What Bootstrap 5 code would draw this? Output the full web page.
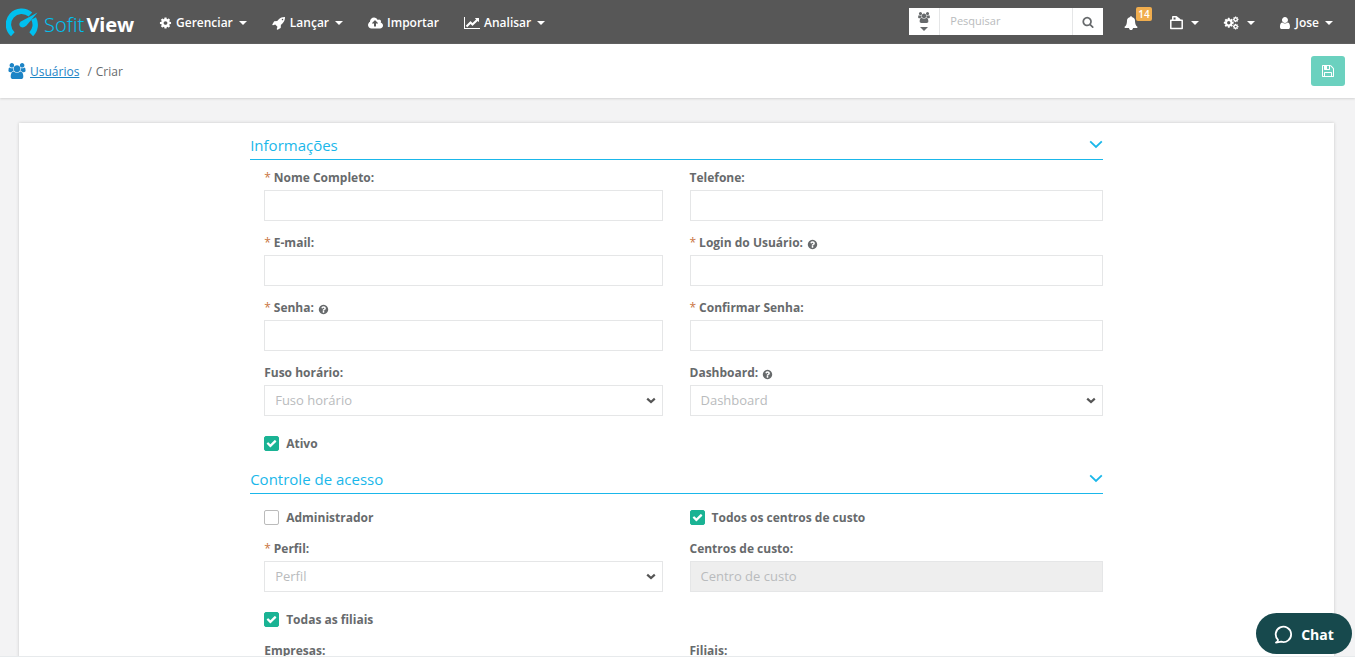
<!DOCTYPE html>
<html lang="pt-BR">
<head>
<meta charset="utf-8">
<meta name="viewport" content="width=device-width, initial-scale=1">
<title>SofitView - Usuários</title>
<link href="https://cdn.jsdelivr.net/npm/bootstrap@5.3.0/dist/css/bootstrap.min.css" rel="stylesheet">
<style>
  body { font-family: "Open Sans", sans-serif; font-size: 13px; line-height: 20px; color: #676a6c; background: #f3f3f4; }
  svg { fill: currentColor; flex: none; }
  .topbar { background: #575757; min-height: 44px; padding: 2px 22px 0 6px; }
  .brand-text { font-family: "Noto Sans", sans-serif; font-size: 20px; line-height: 28px; padding-top: 3px; }
  .brand-a { color: #00c0ef; font-weight: 300; }
  .brand-b { color: #fff; font-weight: 700; margin-left: 2px; }
  .topbar .menu-link { color: #fff; font-size: 12px; font-weight: 600; text-decoration: none; display: flex; align-items: center; gap: 4px; white-space: nowrap; }
  .tri { width: 0; height: 0; border: 4px solid transparent; border-top-color: currentColor; border-bottom: 0; margin-left: 2px; }
  .main-menu { gap: 25px; margin-left: 25px; }
  .side-menu { gap: 24px; margin-left: 21px; }
  .search-box { width: 194px; height: 27px; background: #fff; margin-bottom: 3px; }
  .search-box button { border: 0; background: #fff; color: #676a6c; padding: 0; width: 30px; }
  .search-box input { border: 1px solid #e5e6e7; border-width: 0 1px; border-radius: 0; font-size: 11px; padding: 0 10px; color: #676a6c; box-shadow: none; min-width: 0; }
  .notice { left: 12px; top: -6px; background: #f0ad4e; color: #fff; font-size: 10px; line-height: 14px; padding: 0 2px; border-radius: 2px; font-weight: 600; }
  .crumbs { background: #fff; min-height: 54px; padding: 0 10px 0 8px; box-shadow: 0 1px 2px #d4d4d4; font-size: 12px; }
  .crumbs a, .crumbs span { padding-top: 2px; }
  .crumbs a, .crumbs-icon { color: #1c84c6; }
  .btn-save { background: #6bd1bf; color: #fff; width: 34px; height: 30px; border-radius: 3px; padding: 0; }
  .btn-save:hover { background: #1ab394; color: #fff; }
  .panel { background: #fff; margin: 25px 21px 0 19px; padding-top: 10px; min-height: 700px; box-shadow: 0 0 3px #c8c8c8; }
  .form-col { padding: 0 12px; }
  .section-title { color: #1ab7ea; border-bottom: 1px solid #1ab7ea; height: 27px; font-size: 15px; line-height: 24px; font-weight: 500; margin: 0; padding-bottom: 2px; }
  .section-title button { border: 0; background: none; color: inherit; padding: 0 0 4px; line-height: 1; }
  .fields { --bs-gutter-x: 0; }
  .col-l { padding: 0 14px; }
  .col-r { padding-left: 13px; }
  .field { margin-top: 14px; }
  .first-field { margin-top: 10px; }
  .field label { display: flex; align-items: center; height: 16px; margin-bottom: 4px; font-size: 12px; font-weight: 700; }
  .field label i { color: #c9743f; font-style: normal; font-weight: 400; margin-right: 3px; }
  .field label svg { margin-left: 4px; margin-top: 2px; }
  .field .form-control, .field .form-select { height: 31px; font-size: 13px; line-height: 20px; border: 1px solid #e5e6e7; border-radius: 0; padding: 3px 10px 5px; color: #b9bbbd; background-color: #fff; }
  .field .form-select { background-image: url("data:image/svg+xml,%3Csvg xmlns='http://www.w3.org/2000/svg' viewBox='0 0 10 7'%3E%3Cpath d='M1.2 1.6 5 5 8.8 1.6' fill='none' stroke='%23555' stroke-width='2.2'/%3E%3C/svg%3E"); background-size: 10px 7px; background-position: right 6px center; }
  .field .form-control:disabled { background: #eee; }
  .form-control::placeholder { color: #b9bbbd; opacity: 1; }
  .tick { display: flex; align-items: center; gap: 7px; height: 20px; margin-top: 17px; font-size: 12px; line-height: 18px; font-weight: 700; }
  .tick span { padding-top: 2px; }
  .tick-top { margin-top: 13px; }
  .group-gap { margin-top: 14px; }
  .tick .form-check-input { width: 15px; height: 15px; margin: 0; border: 1px solid #bbb; border-radius: 2px; flex: none; }
  .tick .form-check-input:checked { background-color: #1ab394; border-color: #1ab394; background-size: 11px 11px; background-image: url("data:image/svg+xml,%3Csvg xmlns='http://www.w3.org/2000/svg' viewBox='0 0 1792 1792'%3E%3Cpath fill='%23fff' d='M1671 566q0 40-28 68l-724 724-136 136q-28 28-68 28t-68-28l-136-136-362-362q-28-28-28-68t28-68l136-136q28-28 68-28t68 28l294 295 656-657q28-28 68-28t68 28l136 136q28 28 28 68z'/%3E%3C/svg%3E"); }
  .page-foot { border-top: 1px solid #e7eaec; }
  .chat { right: 3px; bottom: 3px; width: 96px; height: 41px; border: 0; border-radius: 21px; background: #17494d; color: #fff; font-size: 14px; font-weight: 700; padding-top: 3px; }
</style>
</head>
<body class="vh-100 d-flex flex-column overflow-hidden">

<svg class="d-none" aria-hidden="true">
  <symbol id="gear" viewBox="0 0 1792 1792"><path d="M1152 896q0-106-75-181t-181-75-181 75-75 181 75 181 181 75 181-75 75-181zm512-109v222q0 12-8 23t-20 13l-185 28q-19 54-39 91 35 50 107 138 10 12 10 25t-9 23q-27 37-99 108t-94 71q-12 0-26-9l-138-108q-44 23-91 38-16 136-29 186-7 28-36 28h-222q-14 0-24.500-8.500t-11.500-21.500l-28-184q-49-16-90-37l-141 107q-10 9-25 9-14 0-25-11-126-114-165-168-7-10-7-23 0-12 8-23 15-21 51-66.500t54-70.500q-27-50-41-99l-183-27q-13-2-21-12.500t-8-23.500v-222q0-12 8-23t19-13l186-28q14-46 39-92-40-57-107-138-10-12-10-24 0-10 9-23 26-36 98.500-107.500t94.500-71.500q13 0 26 10l138 107q44-23 91-38 16-136 29-186 7-28 36-28h222q14 0 24.500 8.500t11.500 21.500l28 184q49 16 90 37l142-107q9-9 24-9 13 0 25 10 129 119 165 170 7 8 7 22 0 12-8 23-15 21-51 66.500t-54 70.500q26 50 41 98l183 28q13 2 21 12.500t8 23.500z"/></symbol>
  <symbol id="users" viewBox="0 0 1920 1792"><path d="M593 896q-162 5-265 128h-134q-82 0-138-40.500t-56-118.500q0-353 124-353 6 0 43.500 21t97.500 42.500 119 21.500q67 0 133-23-5 37-5 66 0 139 81 256zm1071 637q0 120-73 189.500t-194 69.500h-874q-121 0-194-69.500t-73-189.500q0-53 3.500-103.500t14-109 26.500-108.500 43-97.500 62-81 85.500-53.500 111.500-20q10 0 43 21.500t73 48 107 48 135 21.500 135-21.500 107-48 73-48 43-21.500q61 0 111.500 20t85.500 53.500 62 81 43 97.500 26.500 108.500 14 109 3.500 103.500zm-1024-1277q0 106-75 181t-181 75-181-75-75-181 75-181 181-75 181 75 75 181zm704 384q0 159-112.500 271.500t-271.500 112.500-271.500-112.500-112.500-271.500 112.500-271.500 271.500-112.500 271.500 112.500 112.500 271.500zm576 225q0 78-56 118.500t-138 40.500h-134q-103-123-265-128 81-117 81-256 0-29-5-66 66 23 133 23 59 0 119-21.500t97.500-42.500 43.500-21q124 0 124 353zm-128-609q0 106-75 181t-181 75-181-75-75-181 75-181 181-75 181 75 75 181z"/></symbol>
  <symbol id="help" viewBox="0 0 1792 1792"><path d="M1024 1376v-192q0-14-9-23t-23-9h-192q-14 0-23 9t-9 23v192q0 14 9 23t23 9h192q14 0 23-9t9-23zm256-672q0-88-55.500-163t-138.500-116-170-41q-243 0-371 213-15 24 8 42l132 100q7 6 19 6 16 0 25-12 53-68 86-92 34-24 86-24 48 0 85.500 26t37.500 59q0 38-20 61t-68 45q-63 28-115.500 86.500t-52.500 125.500v36q0 14 9 23t23 9h192q14 0 23-9t9-23q0-19 21.500-49.500t54.500-49.500q32-18 49-28.500t46-35 44.500-48 28-60.500 12.500-81zm384 192q0 209-103 385.500t-279.500 279.500-385.500 103-385.500-103-279.500-279.500-103-385.500 103-385.500 279.500-279.500 385.500-103 385.500 103 279.500 279.500 103 385.500z"/></symbol>
  <symbol id="angle" viewBox="0 0 14 9"><path d="M1.200 1.300 7 7 12.800 1.300" fill="none" stroke="currentColor" stroke-width="1.800"/></symbol>
</svg>

<nav class="topbar d-flex align-items-center flex-shrink-0" aria-label="Principal">
  <a href="#" class="d-flex align-items-center text-decoration-none">
    <svg width="34" height="30" viewBox="0 0 34 30" aria-hidden="true">
      <path d="M6.800 26.200A13 13 0 1 1 24.400 6.600M27.600 10.500A13 13 0 0 1 25.200 26.200" fill="none" stroke="#00c0ef" stroke-width="5.400"/>
      <path d="M31.500 4.600 20.500 17.600q-2.600 2.800-6 1.200-2.600-2.700.4-5.300z" fill="#00c0ef"/>
    </svg>
    <span class="brand-text ms-1"><span class="brand-a">Sofit</span><span class="brand-b">View</span></span>
  </a>
  <div class="main-menu d-flex">
    <a href="#" class="menu-link"><svg width="13" height="14"><use href="#gear"/></svg>Gerenciar<span class="tri"></span></a>
    <a href="#" class="menu-link"><svg width="14" height="14" viewBox="0 0 1792 1792"><path d="M1440 448q0-40-28-68t-68-28-68 28-28 68 28 68 68 28 68-28 28-68zm224-288q0 249-75.500 430.500t-253.500 360.500q-81 80-195 176l-20 379q-2 16-16 26l-384 224q-7 4-16 4-12 0-23-9l-64-64q-13-14-8-32l85-276-281-281-276 85q-3 1-9 1-14 0-23-9l-64-64q-17-19-5-39l224-384q10-14 26-16l379-20q96-114 176-195 188-187 358-258t431-71q14 0 24 9.500t10 22.500z"/></svg>Lançar<span class="tri"></span></a>
    <a href="#" class="menu-link"><svg width="15" height="14" viewBox="0 0 1920 1792"><path d="M1280 928q0-14-9-23l-352-352q-9-9-23-9t-23 9l-351 351q-10 12-10 24 0 14 9 23t23 9h224v352q0 13 9.500 22.500t22.500 9.500h192q13 0 22.500-9.500t9.500-22.500v-352h224q13 0 22.500-9.500t9.500-22.500zm640 288q0 159-112.500 271.500t-271.500 112.500h-1088q-185 0-316.500-131.500t-131.500-316.500q0-130 70-240t188-165q-2-30-2-43 0-212 150-362t362-150q156 0 285.500 87t188.500 231q71-62 166-62 106 0 181 75t75 181q0 76-41 138 130 31 213.500 135.500t83.500 238.500z"/></svg>Importar</a>
    <a href="#" class="menu-link"><svg width="16" height="14" viewBox="0 0 2048 1792"><path d="M2048 1536v128h-2048v-1536h128v1408h1920zm-128-1248v435q0 21-19.500 29.500t-35.500-7.500l-121-121-633 633q-10 10-23 10t-23-10l-233-233-416 416-192-192 585-585q10-10 23-10t23 10l233 233 464-464-121-121q-16-16-7.500-35.500t29.500-19.500h435q14 0 23 9t9 23z"/></svg>Analisar<span class="tri"></span></a>
  </div>
  <form class="search-box d-flex ms-auto">
    <button type="button" class="d-flex flex-column align-items-center justify-content-center gap-1" aria-label="Tipo de busca"><svg width="12" height="11"><use href="#users"/></svg><span class="tri m-0"></span></button>
    <input type="text" class="form-control flex-fill w-auto" placeholder="Pesquisar" aria-label="Pesquisar" size="1">
    <button type="submit" class="d-flex align-items-center justify-content-center" aria-label="Buscar"><svg width="12" height="12" viewBox="0 0 1792 1792"><path d="M1216 832q0-185-131.500-316.500t-316.500-131.500-316.500 131.500-131.500 316.500 131.500 316.500 316.500 131.500 316.500-131.500 131.500-316.500zm512 832q0 52-38 90t-90 38q-54 0-90-38l-343-342q-179 124-399 124-143 0-273.500-55.500t-225-150-150-225-55.500-273.500 55.500-273.500 150-225 225-150 273.500-55.500 273.500 55.500 225 150 150 225 55.500 273.500q0 220-124 399l343 343q37 37 37 90z"/></svg></button>
  </form>
  <div class="side-menu d-flex">
    <a href="#" class="menu-link position-relative me-2" aria-label="Notificações"><svg width="14" height="14" viewBox="0 0 1792 1792"><path d="M1728 1408q0 52-38 90t-90 38h-448q0 106-75 181t-181 75-181-75-75-181h-448q-52 0-90-38t-38-90q50-42 91-88t85-119.500 74.500-158.500 50-206 19.500-260q0-152 117-282.500t307-158.500q-8-19-8-39 0-40 28-68t68-28 68 28 28 68q0 20-8 39 190 28 307 158.500t117 282.500q0 139 19.500 260t50 206 74.500 158.500 85 119.500 91 88z"/></svg><span class="notice position-absolute">14</span></a>
    <a href="#" class="menu-link" aria-label="Documentos"><svg width="13" height="16" viewBox="0 0 13 16"><path d="M.8 5.200h11.400v8.400H.8zM2.800 5V1.800h3.600L9.800 4.600v.6M6.300 2v2.800h3" fill="none" stroke="currentColor" stroke-width="1.500" stroke-linejoin="round"/></svg><span class="tri ms-1"></span></a>
    <a href="#" class="menu-link" aria-label="Configurações"><svg width="16" height="14" viewBox="0 0 16 14"><use href="#gear" x="0" y="1" width="11.500" height="11.500"/><use href="#gear" x="9.300" y="0" width="6.700" height="6.700"/><use href="#gear" x="9.300" y="7.300" width="6.700" height="6.700"/></svg><span class="tri ms-1"></span></a>
    <a href="#" class="menu-link"><svg width="12" height="14" viewBox="200 0 1400 1792"><path d="M1536 1399q0 109-62.500 187t-150.500 78h-854q-88 0-150.500-78t-62.500-187q0-85 8.500-160.500t31.500-152 58.500-131 94-89 134.500-34.500q131 128 313 128t313-128q76 0 134.500 34.500t94 89 58.500 131 31.500 152 8.500 160.500zm-256-887q0 159-112.500 271.500t-271.500 112.500-271.500-112.500-112.500-271.500 112.500-271.500 271.500-112.500 271.500 112.500 112.500 271.500z"/></svg>Jose<span class="tri"></span></a>
  </div>
</nav>

<header class="crumbs d-flex align-items-center flex-shrink-0">
  <svg class="crumbs-icon" width="18" height="16"><use href="#users"/></svg>
  <a href="#" class="ms-1">Usuários</a><span class="ms-2 me-1">/</span><span>Criar</span>
  <button type="button" class="btn btn-save ms-auto d-flex align-items-center justify-content-center" aria-label="Salvar"><svg width="14" height="14" viewBox="0 0 1792 1792"><path d="M512 1536h768v-384h-768v384zm896 0h128v-896q0-14-10-38.500t-20-34.500l-281-281q-10-10-34-20t-39-10v416q0 40-28 68t-68 28h-576q-40 0-68-28t-28-68v-416h-128v1280h128v-416q0-40 28-68t68-28h832q40 0 68 28t28 68v416zm-384-928v-320q0-13-9.500-22.500t-22.500-9.500h-192q-13 0-22.500 9.500t-9.500 22.500v320q0 13 9.500 22.500t22.500 9.500h192q13 0 22.500-9.500t9.500-22.500zm640 32v928q0 40-28 68t-68 28h-1344q-40 0-68-28t-28-68v-1344q0-40 28-68t68-28h928q40 0 88 20t76 48l280 280q28 28 48 76t20 88z"/></svg></button>
</header>

<main class="flex-fill overflow-hidden">
  <form class="panel">
    <div class="row g-0 justify-content-center">
      <div class="col-8 form-col">
        <h2 class="section-title d-flex justify-content-between align-items-center">Informações<button type="button" aria-label="Recolher Informações"><svg width="14" height="9"><use href="#angle"/></svg></button></h2>
        <div class="row fields">
          <div class="col-6 col-l">
            <div class="field first-field"><label for="nome"><i>*</i>Nome Completo:</label><input id="nome" type="text" class="form-control"></div>
            <div class="field"><label for="email"><i>*</i>E-mail:</label><input id="email" type="email" class="form-control"></div>
            <div class="field"><label for="senha"><i>*</i>Senha:<svg width="11" height="11"><use href="#help"/></svg></label><input id="senha" type="password" class="form-control"></div>
            <div class="field"><label for="fuso">Fuso horário:</label><select id="fuso" class="form-select"><option>Fuso horário</option></select></div>
            <label class="tick"><input type="checkbox" class="form-check-input" checked><span>Ativo</span></label>
          </div>
          <div class="col-6 col-r">
            <div class="field first-field"><label for="tel">Telefone:</label><input id="tel" type="tel" class="form-control"></div>
            <div class="field"><label for="login"><i>*</i>Login do Usuário:<svg width="11" height="11"><use href="#help"/></svg></label><input id="login" type="text" class="form-control"></div>
            <div class="field"><label for="confirma"><i>*</i>Confirmar Senha:</label><input id="confirma" type="password" class="form-control"></div>
            <div class="field"><label for="dash">Dashboard:<svg width="11" height="11"><use href="#help"/></svg></label><select id="dash" class="form-select"><option>Dashboard</option></select></div>
          </div>
        </div>
        <h2 class="section-title group-gap d-flex justify-content-between align-items-center">Controle de acesso<button type="button" aria-label="Recolher Controle de acesso"><svg width="14" height="9"><use href="#angle"/></svg></button></h2>
        <div class="row fields">
          <div class="col-6 col-l">
            <label class="tick tick-top"><input type="checkbox" class="form-check-input"><span>Administrador</span></label>
            <div class="field"><label for="perfil"><i>*</i>Perfil:</label><select id="perfil" class="form-select"><option>Perfil</option></select></div>
            <label class="tick"><input type="checkbox" class="form-check-input" checked><span>Todas as filiais</span></label>
          </div>
          <div class="col-6 col-r">
            <label class="tick tick-top"><input type="checkbox" class="form-check-input" checked><span>Todos os centros de custo</span></label>
            <div class="field"><label for="centro">Centros de custo:</label><input id="centro" type="text" class="form-control" placeholder="Centro de custo" disabled></div>
          </div>
        </div>
        <div class="row fields">
          <div class="col-6 col-l"><div class="field"><label for="empresas">Empresas:</label><input id="empresas" type="text" class="form-control"></div></div>
          <div class="col-6 col-r"><div class="field"><label for="filiais">Filiais:</label><input id="filiais" type="text" class="form-control"></div></div>
        </div>
      </div>
    </div>
  </form>
</main>
<footer class="page-foot flex-shrink-0"></footer>

<button type="button" class="chat position-fixed d-flex align-items-center justify-content-center gap-2">
  <svg width="19" height="19" viewBox="0 0 19 19" aria-hidden="true"><path d="M4 14.800A7.700 7.700 0 1 1 7.200 16.700L2 17.600Q4.200 16.400 4 14.800z" fill="none" stroke="#fff" stroke-width="1.800" stroke-linejoin="round"/></svg>Chat
</button>
<script src="https://cdn.jsdelivr.net/npm/bootstrap@5.3.0/dist/js/bootstrap.bundle.min.js"></script>
</body>
</html>
